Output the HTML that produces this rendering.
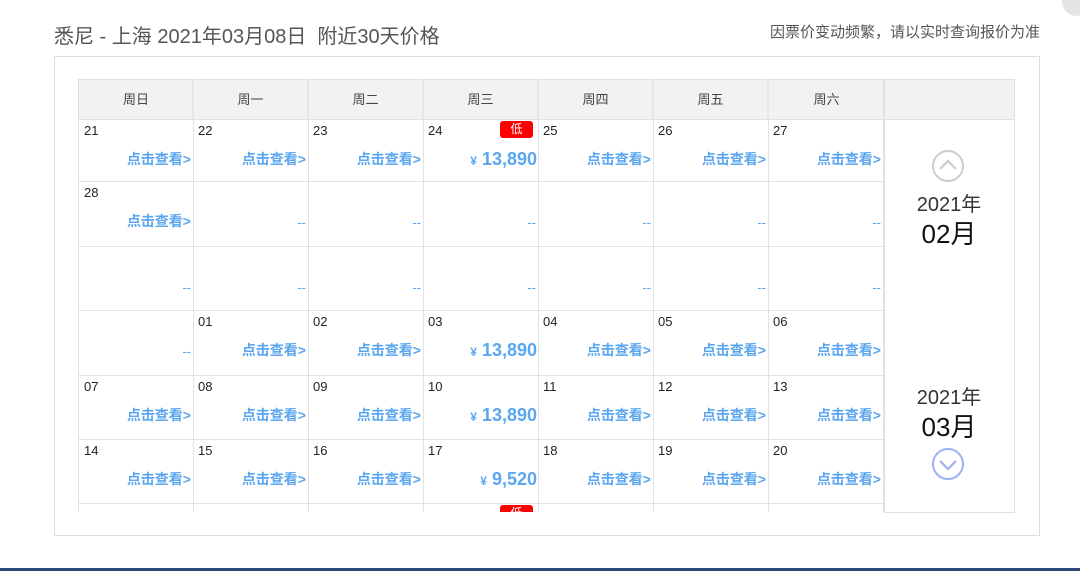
<!DOCTYPE html>
<html><head><meta charset="utf-8"><style>
*{margin:0;padding:0;box-sizing:border-box}
body{width:1080px;height:571px;overflow:hidden;background:#fff;font-family:"Liberation Sans","Noto Sans CJK SC",sans-serif;position:relative}
.a{position:absolute}
.title{left:54px;top:20px;font-size:20px;color:#555;white-space:nowrap}
.note{right:40px;top:21px;font-size:15px;color:#555;white-space:nowrap}
.box{left:54px;top:56px;width:986px;height:480px;border:1px solid #ddd}
.hd{top:0;height:41px;width:115px;background:#f2f2f2;border-top:1px solid #e0e0e0;border-bottom:1px solid #e0e0e0;border-left:2px solid #e6e6e6;text-align:center;line-height:40px;font-size:13px;color:#444}
.c{width:116px;border-right:1px solid #e2e2e2;border-bottom:1px solid #e2e2e2;background:transparent}
.d{position:absolute;left:5px;top:4px;font-size:13px;color:#222}
.l{position:absolute;right:2px;top:30px;font-size:14px;font-weight:bold;color:#5aa6f0;white-space:nowrap}
.p{position:absolute;right:1px;top:30px;font-size:18px;font-weight:bold;color:#5aa6f0;white-space:nowrap}
.p small{font-size:12px;margin-right:5px}
.dash{position:absolute;right:2px;top:34px;font-size:13px;color:#5aa6f0}
.bd{position:absolute;right:5px;top:2px;width:33px;height:17px;background:#f00;color:#fff;border-radius:3px;font-size:12px;text-align:center;line-height:17px}
</style></head><body>
<div class="a title">悉尼 - 上海 2021年03月08日&nbsp; 附近30天价格</div>
<div class="a note">因票价变动频繁，请以实时查询报价为准</div>
<div class="a" style="left:1062px;top:-14px;width:30px;height:30px;border-radius:50%;background:#e4e4e4"></div>
<div class="a box"></div>
<div class="a" style="left:78px;top:79px;width:807px;height:433px;overflow:hidden">
<div class="a hd" style="left:0;border-left:1px solid #e0e0e0">周日</div>
<div class="a hd" style="left:114px">周一</div>
<div class="a hd" style="left:229px">周二</div>
<div class="a hd" style="left:344px">周三</div>
<div class="a hd" style="left:459px">周四</div>
<div class="a hd" style="left:574px">周五</div>
<div class="a hd" style="left:689px;width:117px">周六</div>
<div class="a" style="left:805px;top:0;width:2px;height:433px;background:#e2e2e2"></div>
<div style="position:absolute;left:0;top:40px;width:806px;height:400px">
<div class="a c" style="left:0;top:0;height:63px;border-left:1px solid #e2e2e2"><span class="d">21</span><span class="l">点击查看&gt;</span></div>
<div class="a c" style="left:115px;top:0;height:63px"><span class="d">22</span><span class="l">点击查看&gt;</span></div>
<div class="a c" style="left:230px;top:0;height:63px"><span class="d">23</span><span class="l">点击查看&gt;</span></div>
<div class="a c" style="left:345px;top:0;height:63px"><span class="d">24</span><span class="bd">低</span><span class="p"><small>¥</small>13,890</span></div>
<div class="a c" style="left:460px;top:0;height:63px"><span class="d">25</span><span class="l">点击查看&gt;</span></div>
<div class="a c" style="left:575px;top:0;height:63px"><span class="d">26</span><span class="l">点击查看&gt;</span></div>
<div class="a c" style="left:690px;top:0;height:63px"><span class="d">27</span><span class="l">点击查看&gt;</span></div>
<div class="a c" style="left:0;top:62px;height:66px;border-left:1px solid #e2e2e2"><span class="d">28</span><span class="l">点击查看&gt;</span></div>
<div class="a c" style="left:115px;top:62px;height:66px"><span class="dash">--</span></div>
<div class="a c" style="left:230px;top:62px;height:66px"><span class="dash">--</span></div>
<div class="a c" style="left:345px;top:62px;height:66px"><span class="dash">--</span></div>
<div class="a c" style="left:460px;top:62px;height:66px"><span class="dash">--</span></div>
<div class="a c" style="left:575px;top:62px;height:66px"><span class="dash">--</span></div>
<div class="a c" style="left:690px;top:62px;height:66px"><span class="dash">--</span></div>
<div class="a c" style="left:0;top:127px;height:65px;border-left:1px solid #e2e2e2"><span class="dash">--</span></div>
<div class="a c" style="left:115px;top:127px;height:65px"><span class="dash">--</span></div>
<div class="a c" style="left:230px;top:127px;height:65px"><span class="dash">--</span></div>
<div class="a c" style="left:345px;top:127px;height:65px"><span class="dash">--</span></div>
<div class="a c" style="left:460px;top:127px;height:65px"><span class="dash">--</span></div>
<div class="a c" style="left:575px;top:127px;height:65px"><span class="dash">--</span></div>
<div class="a c" style="left:690px;top:127px;height:65px"><span class="dash">--</span></div>
<div class="a c" style="left:0;top:191px;height:66px;border-left:1px solid #e2e2e2"><span class="dash">--</span></div>
<div class="a c" style="left:115px;top:191px;height:66px"><span class="d">01</span><span class="l">点击查看&gt;</span></div>
<div class="a c" style="left:230px;top:191px;height:66px"><span class="d">02</span><span class="l">点击查看&gt;</span></div>
<div class="a c" style="left:345px;top:191px;height:66px"><span class="d">03</span><span class="p"><small>¥</small>13,890</span></div>
<div class="a c" style="left:460px;top:191px;height:66px"><span class="d">04</span><span class="l">点击查看&gt;</span></div>
<div class="a c" style="left:575px;top:191px;height:66px"><span class="d">05</span><span class="l">点击查看&gt;</span></div>
<div class="a c" style="left:690px;top:191px;height:66px"><span class="d">06</span><span class="l">点击查看&gt;</span></div>
<div class="a c" style="left:0;top:256px;height:65px;border-left:1px solid #e2e2e2"><span class="d">07</span><span class="l">点击查看&gt;</span></div>
<div class="a c" style="left:115px;top:256px;height:65px"><span class="d">08</span><span class="l">点击查看&gt;</span></div>
<div class="a c" style="left:230px;top:256px;height:65px"><span class="d">09</span><span class="l">点击查看&gt;</span></div>
<div class="a c" style="left:345px;top:256px;height:65px"><span class="d">10</span><span class="p"><small>¥</small>13,890</span></div>
<div class="a c" style="left:460px;top:256px;height:65px"><span class="d">11</span><span class="l">点击查看&gt;</span></div>
<div class="a c" style="left:575px;top:256px;height:65px"><span class="d">12</span><span class="l">点击查看&gt;</span></div>
<div class="a c" style="left:690px;top:256px;height:65px"><span class="d">13</span><span class="l">点击查看&gt;</span></div>
<div class="a c" style="left:0;top:320px;height:65px;border-left:1px solid #e2e2e2"><span class="d">14</span><span class="l">点击查看&gt;</span></div>
<div class="a c" style="left:115px;top:320px;height:65px"><span class="d">15</span><span class="l">点击查看&gt;</span></div>
<div class="a c" style="left:230px;top:320px;height:65px"><span class="d">16</span><span class="l">点击查看&gt;</span></div>
<div class="a c" style="left:345px;top:320px;height:65px"><span class="d">17</span><span class="p"><small>¥</small>9,520</span></div>
<div class="a c" style="left:460px;top:320px;height:65px"><span class="d">18</span><span class="l">点击查看&gt;</span></div>
<div class="a c" style="left:575px;top:320px;height:65px"><span class="d">19</span><span class="l">点击查看&gt;</span></div>
<div class="a c" style="left:690px;top:320px;height:65px"><span class="d">20</span><span class="l">点击查看&gt;</span></div>
<div class="a c" style="left:0;top:384px;height:65px;border-left:1px solid #e2e2e2"></div>
<div class="a c" style="left:115px;top:384px;height:65px"></div>
<div class="a c" style="left:230px;top:384px;height:65px"></div>
<div class="a c" style="left:345px;top:384px;height:65px"><span class="bd">低</span></div>
<div class="a c" style="left:460px;top:384px;height:65px"></div>
<div class="a c" style="left:575px;top:384px;height:65px"></div>
<div class="a c" style="left:690px;top:384px;height:65px"></div>
</div>
</div>
<div class="a" style="left:884px;top:79px;width:131px;height:434px;border:1px solid #e0e0e0;border-left:none;background:#fff">
<div style="height:40px;background:#f2f2f2;border-bottom:1px solid #e0e0e0"></div>
<svg class="a" style="left:47px;top:69px" width="34" height="34" viewBox="0 0 34 34"><circle cx="17" cy="17" r="15" fill="none" stroke="#ccc" stroke-width="2"/><path d="M9 20 L17 12 L25 20" fill="none" stroke="#ccc" stroke-width="2.2"/></svg>
<div class="a" style="left:0;width:130px;top:108px;text-align:center;font-size:20px;color:#333">2021年</div>
<div class="a" style="left:0;width:130px;top:134px;text-align:center;font-size:26px;color:#111">02月</div>
<div class="a" style="left:0;width:130px;top:301px;text-align:center;font-size:20px;color:#333">2021年</div>
<div class="a" style="left:0;width:130px;top:327px;text-align:center;font-size:26px;color:#111">03月</div>
<svg class="a" style="left:47px;top:367px" width="34" height="34" viewBox="0 0 34 34"><circle cx="17" cy="17" r="15" fill="none" stroke="#9fb0f5" stroke-width="2"/><path d="M9 14 L17 22 L25 14" fill="none" stroke="#9fb0f5" stroke-width="2.2"/></svg>
</div>
<div class="a" style="left:884px;top:79px;width:1px;height:434px;background:#e0e0e0"></div>
<div class="a" style="left:0;top:568px;width:1080px;height:3px;background:#2f4a7a"></div>
</body></html>
